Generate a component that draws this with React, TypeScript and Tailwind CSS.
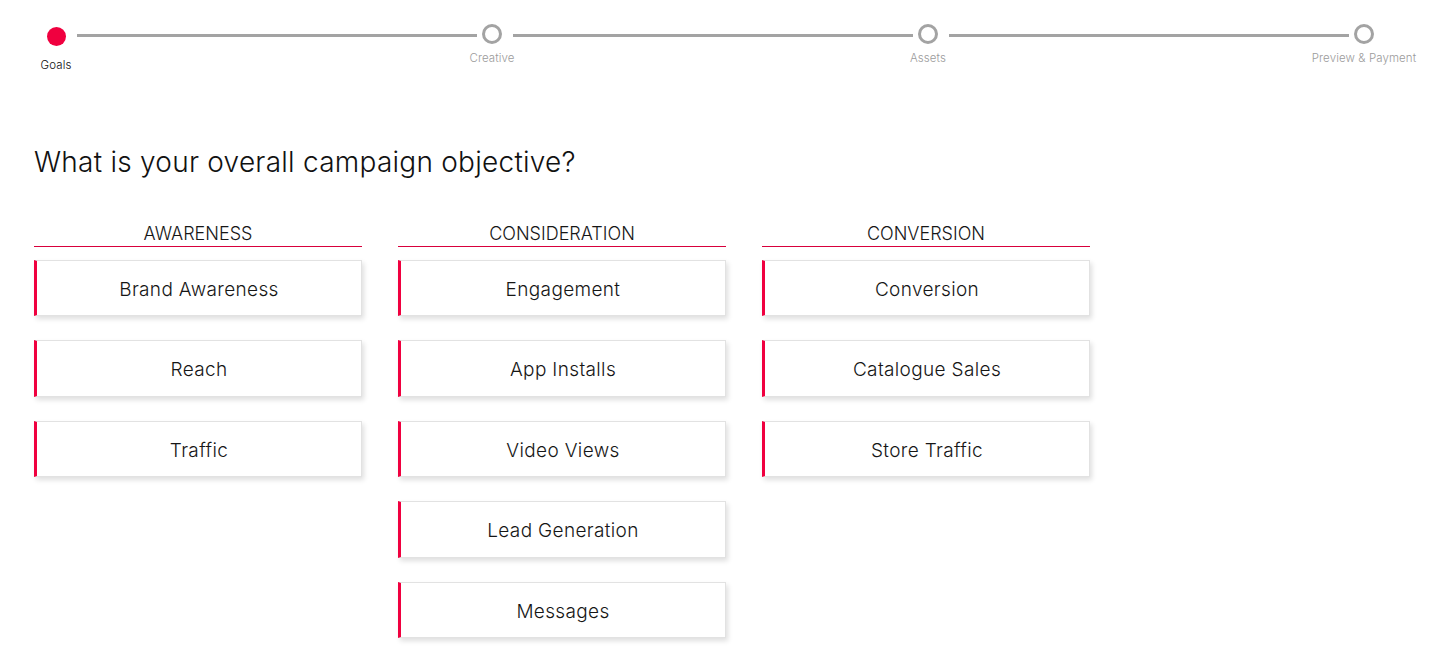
import React from "react";

type Step = { label: string; done?: boolean };

const steps: Step[] = [
  { label: "Goals", done: true },
  { label: "Creative" },
  { label: "Assets" },
  { label: "Preview & Payment" },
];

const groups: { title: string; options: string[] }[] = [
  { title: "AWARENESS", options: ["Brand Awareness", "Reach", "Traffic"] },
  {
    title: "CONSIDERATION",
    options: ["Engagement", "App Installs", "Video Views", "Lead Generation", "Messages"],
  },
  { title: "CONVERSION", options: ["Conversion", "Catalogue Sales", "Store Traffic"] },
];

function StepDot({ step }: { step: Step }) {
  return (
    <div className="flex w-5 shrink-0 flex-col items-center">
      {step.done ? (
        <span className="mt-[27px] block size-[19px] rounded-full bg-[#f0003f]" />
      ) : (
        <span className="mt-[24px] block size-5 rounded-full border-[3px] border-[#a3a3a3]" />
      )}
      <span
        className={
          step.done
            ? "mt-[12px] whitespace-nowrap text-[11.5px] leading-[14px] tracking-[0.1px] text-[#111]"
            : "mt-[7px] whitespace-nowrap text-[11.5px] leading-[14px] tracking-[0.1px] text-[#9b9b9b]"
        }
      >
        {step.label}
      </span>
    </div>
  );
}

function Stepper() {
  return (
    <div className="flex items-start pl-[46px] pr-[73px]">
      {steps.map((s, i) => (
        <React.Fragment key={s.label}>
          {i > 0 && <div className="mt-[34px] ml-[11px] mr-[5px] h-[3px] flex-1 bg-[#a3a3a3]" />}
          <StepDot step={s} />
        </React.Fragment>
      ))}
    </div>
  );
}

function ObjectiveCard({ label }: { label: string }) {
  return (
    <button
      type="button"
      className="flex h-[56.5px] w-full items-center justify-center border border-l-[3px] border-[#e2e2e2] border-l-[#f0003f] bg-white pt-[4px] text-[19px] tracking-[0.35px] text-[#161616] shadow-[2px_3px_5px_rgba(0,0,0,0.13)]"
    >
      {label}
    </button>
  );
}

export default function App() {
  return (
    <div
      className="min-h-screen bg-white font-light"
      style={{ fontFamily: "Inter, 'Noto Sans', sans-serif" }}
    >
      <Stepper />
      <div className="px-[34px]">
        <h1 className="mt-[74px] text-[28px] font-light leading-[32px] tracking-[0.25px] text-[#111]">
          What is your overall campaign objective?
        </h1>
        <div className="mt-[42px] flex gap-9">
          {groups.map((g) => (
            <div key={g.title} className="w-[328px]">
              <div className="border-b border-[#d8003c] pt-[3px] pb-[1px] text-center text-[18px] leading-[22px] text-[#161616]">
                {g.title}
              </div>
              <div className="mt-[12.5px] flex flex-col gap-[24px]">
                {g.options.map((o) => (
                  <ObjectiveCard key={o} label={o} />
                ))}
              </div>
            </div>
          ))}
        </div>
      </div>
    </div>
  );
}
